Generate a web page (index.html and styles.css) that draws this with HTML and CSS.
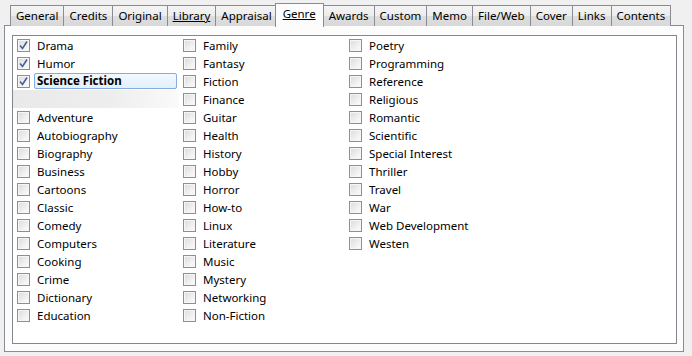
FILE: index.html
```html
<!DOCTYPE html>
<html lang="en">

<head>
    <meta charset="UTF-8">
    <title>Genre</title>
    <link rel="stylesheet" href="styles.css">
</head>

<body>
    <div class="tabs">
        <span class="tab">General</span>
        <span class="tab">Credits</span>
        <span class="tab">Original</span>
        <span class="tab"><u>Library</u></span>
        <span class="tab">Appraisal</span>
        <span class="tab active"><u>Genre</u></span>
        <span class="tab">Awards</span>
        <span class="tab">Custom</span>
        <span class="tab">Memo</span>
        <span class="tab">File/Web</span>
        <span class="tab">Cover</span>
        <span class="tab">Links</span>
        <span class="tab">Contents</span>
    </div>

    <div class="pane">
        <div class="genre-box">
            <div class="genre-col">
                <label class="item"><span class="box checked"></span>Drama</label>
                <label class="item"><span class="box checked"></span>Humor</label>
                <label class="item"><span class="box checked"></span><span class="focused">Science Fiction</span></label>
                <div class="item gap"></div>
                <label class="item"><span class="box"></span>Adventure</label>
                <label class="item"><span class="box"></span>Autobiography</label>
                <label class="item"><span class="box"></span>Biography</label>
                <label class="item"><span class="box"></span>Business</label>
                <label class="item"><span class="box"></span>Cartoons</label>
                <label class="item"><span class="box"></span>Classic</label>
                <label class="item"><span class="box"></span>Comedy</label>
                <label class="item"><span class="box"></span>Computers</label>
                <label class="item"><span class="box"></span>Cooking</label>
                <label class="item"><span class="box"></span>Crime</label>
                <label class="item"><span class="box"></span>Dictionary</label>
                <label class="item"><span class="box"></span>Education</label>
            </div>
            <div class="genre-col">
                <label class="item"><span class="box"></span>Family</label>
                <label class="item"><span class="box"></span>Fantasy</label>
                <label class="item"><span class="box"></span>Fiction</label>
                <label class="item"><span class="box"></span>Finance</label>
                <label class="item"><span class="box"></span>Guitar</label>
                <label class="item"><span class="box"></span>Health</label>
                <label class="item"><span class="box"></span>History</label>
                <label class="item"><span class="box"></span>Hobby</label>
                <label class="item"><span class="box"></span>Horror</label>
                <label class="item"><span class="box"></span>How-to</label>
                <label class="item"><span class="box"></span>Linux</label>
                <label class="item"><span class="box"></span>Literature</label>
                <label class="item"><span class="box"></span>Music</label>
                <label class="item"><span class="box"></span>Mystery</label>
                <label class="item"><span class="box"></span>Networking</label>
                <label class="item"><span class="box"></span>Non-Fiction</label>
            </div>
            <div class="genre-col">
                <label class="item"><span class="box"></span>Poetry</label>
                <label class="item"><span class="box"></span>Programming</label>
                <label class="item"><span class="box"></span>Reference</label>
                <label class="item"><span class="box"></span>Religious</label>
                <label class="item"><span class="box"></span>Romantic</label>
                <label class="item"><span class="box"></span>Scientific</label>
                <label class="item"><span class="box"></span>Special Interest</label>
                <label class="item"><span class="box"></span>Thriller</label>
                <label class="item"><span class="box"></span>Travel</label>
                <label class="item"><span class="box"></span>War</label>
                <label class="item"><span class="box"></span>Web Development</label>
                <label class="item"><span class="box"></span>Westen</label>
            </div>
        </div>
    </div>
</body>

</html>
```

FILE: styles.css
```css
* {
    padding: 0;
    margin: 0;
    box-sizing: border-box;
}

body {
    width: 692px;
    height: 356px;
    background-color: #f0f0f0;
    font-family: "Noto Sans", "Open Sans", sans-serif;
    font-size: 11.5px;
    color: #000;
    overflow: hidden;
}

.tabs {
    display: flex;
    align-items: flex-end;
    height: 26px;
    padding-left: 10px;
    position: relative;
    z-index: 2;
}

.tab {
    height: 21px;
    line-height: 19px;
    padding: 0 5px;
    margin-right: -1px;
    border: 1px solid #898c95;
    border-bottom: none;
    background: linear-gradient(#f4f4f4, #ececec 50%, #dedede 51%, #d8d8d8);
    white-space: nowrap;
}

.tab.active {
    height: 24px;
    line-height: 20px;
    padding: 0 7px;
    margin: 0 -1px 0 -2px;
    background: #fcfcfc;
    position: relative;
    top: 1px;
    z-index: 3;
}

.pane {
    margin: -1px 8px 0 4px;
    height: 327px;
    border: 1px solid #898c95;
    background-color: #fcfcfc;
    padding: 9px 6px 7px 7px;
}

.genre-box {
    height: 100%;
    border: 1px solid #828790;
    background-color: #fff;
    display: flex;
    padding: 0 0 0 4px;
}

.genre-col {
    width: 166px;
    display: flex;
    flex-direction: column;
}

.item {
    display: flex;
    align-items: center;
    height: 18px;
    white-space: nowrap;
}

.item.gap {
    margin-left: -4px;
    width: 166px;
    background: linear-gradient(90deg, #e9e9e9, #eeeeee 60%, #fafafa);
}

.box {
    width: 13px;
    height: 13px;
    margin-right: 7px;
    border: 1px solid #8e8f8f;
    background: linear-gradient(135deg, #dadada, #f4f4f4 70%, #fbfbfb);
    box-shadow: inset 0 0 0 1px #f6f6f6;
    flex-shrink: 0;
}

.box.checked {
    background-image: url("data:image/svg+xml;utf8,<svg xmlns='http://www.w3.org/2000/svg' width='11' height='11'><path d='M2 5.5 L4.5 8.5 L9 1.5' fill='none' stroke='%234a5f97' stroke-width='1.6'/></svg>"), linear-gradient(135deg, #dadada, #f4f4f4 70%, #fbfbfb);
    background-repeat: no-repeat;
}

.focused {
    margin-left: -3px;
    width: 143px;
    height: 16px;
    line-height: 14px;
    padding-left: 2px;
    font-weight: bold;
    border: 1px solid #84acdd;
    border-radius: 2px;
    background: linear-gradient(#f2f8fe, #e3effc);
}
```
